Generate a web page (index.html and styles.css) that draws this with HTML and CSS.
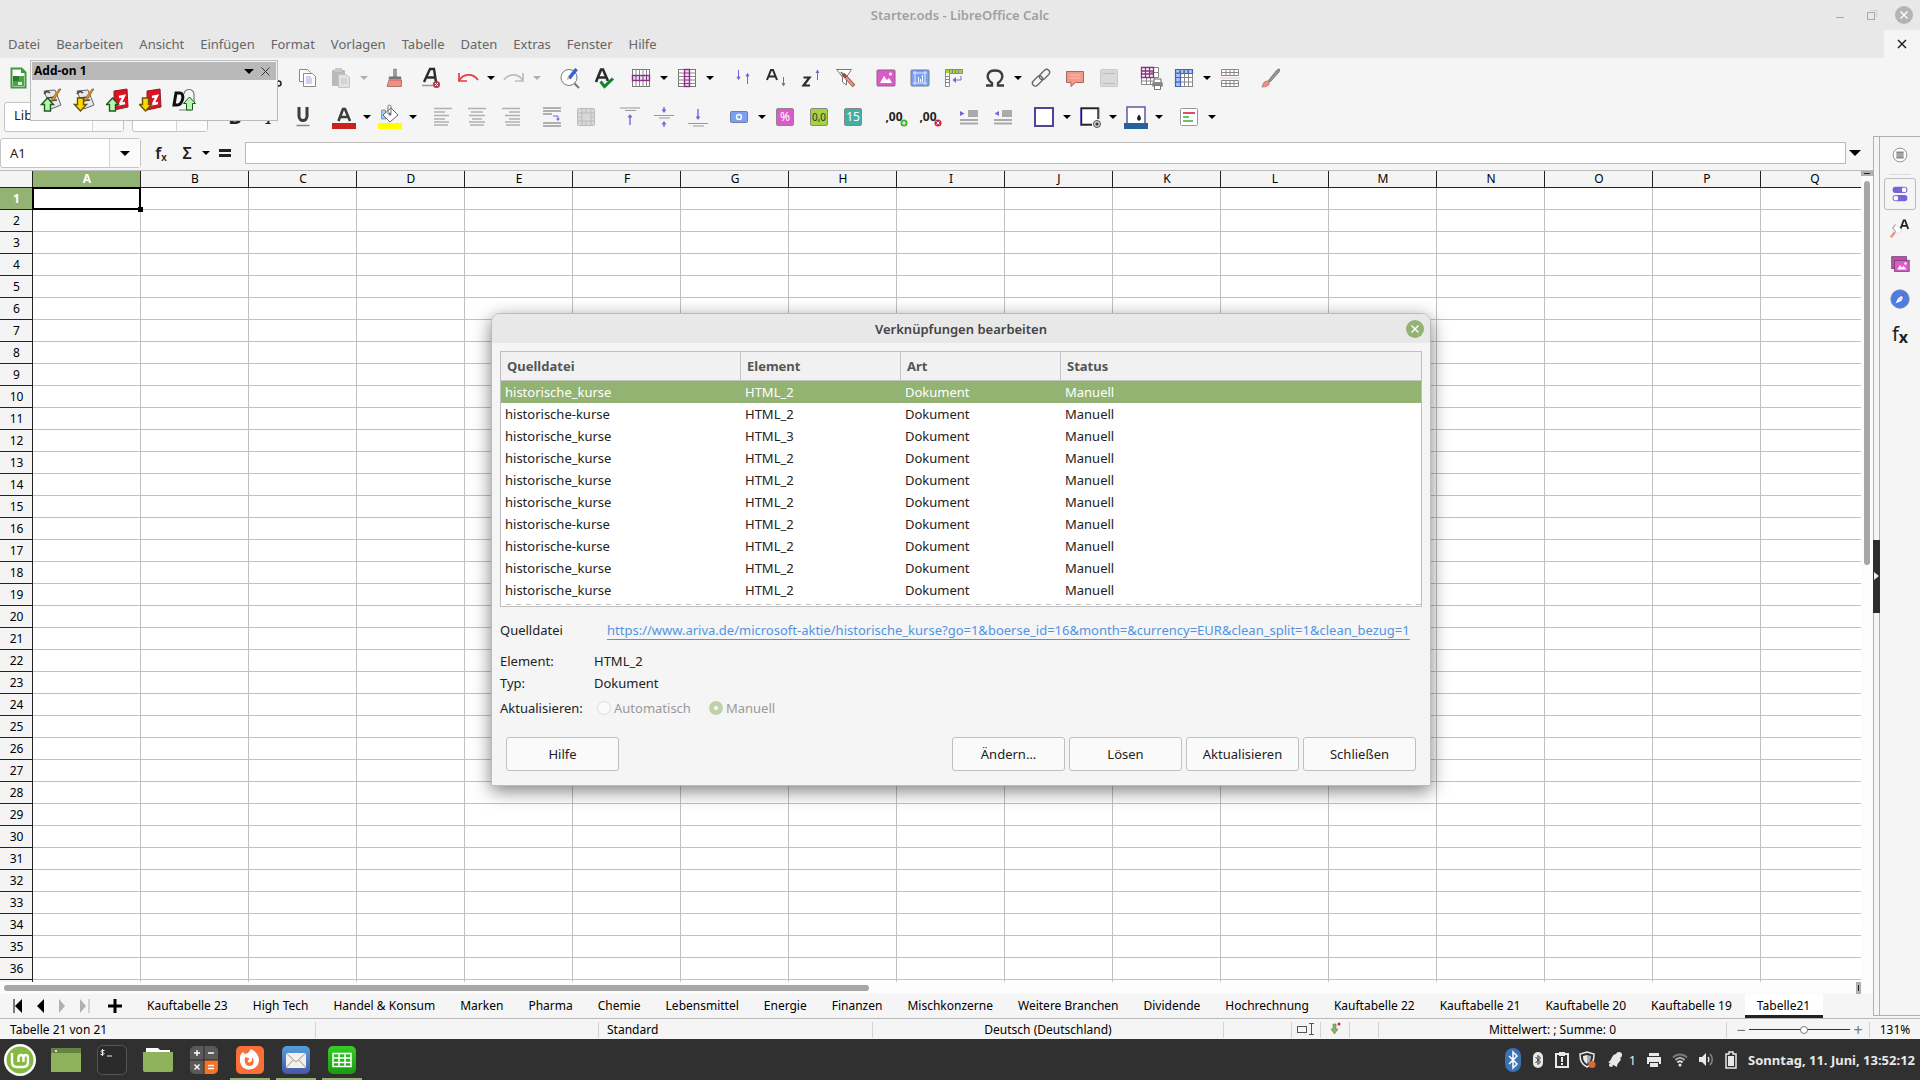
FILE: index.html
```
<!DOCTYPE html>
<html lang="de">
<head>
    <meta charset="UTF-8">
    <meta name="viewport" content="width=device-width, initial-scale=1.0">
    <title>Starter.ods - LibreOffice Calc</title>
    <link rel="stylesheet" href="styles.css">
</head>
<body>
    <header class="titlebar">
        <span class="titlebar-text">Starter.ods - LibreOffice Calc</span>
        <div class="window-buttons">
            <button aria-label="Minimieren"><svg width="20" height="20" viewBox="0 0 20 20"><path d="M6 12.500h8" stroke="#a9a9a9"/></svg></button>
            <button aria-label="Maximieren"><svg width="20" height="20" viewBox="0 0 20 20" fill="none"><path d="M8 5.500h6.500V12" stroke="#d0d0d0"/><rect x="5.500" y="7.500" width="7" height="7" stroke="#a9a9a9"/></svg></button>
            <button aria-label="Schließen"><svg width="20" height="20" viewBox="0 0 20 20"><circle cx="10" cy="10" r="9" fill="#b4b4b4"/><path d="M6.500 6.500l7 7m0-7l-7 7" stroke="#fff" stroke-width="1.400"/></svg></button>
        </div>
    </header>

    <nav class="menubar">
        <button>Datei</button>
        <button>Bearbeiten</button>
        <button>Ansicht</button>
        <button>Einfügen</button>
        <button>Format</button>
        <button>Vorlagen</button>
        <button>Tabelle</button>
        <button>Daten</button>
        <button>Extras</button>
        <button>Fenster</button>
        <button>Hilfe</button>
        <button class="doc-close" aria-label="Dokument schließen"><svg width="12" height="12" viewBox="0 0 12 12"><path d="M2 2l8 8m0-8l-8 8" stroke="#222" stroke-width="1.500"/></svg></button>
    </nav>

    <div class="toolbars">
        <!-- Standardleiste -->
        <div class="toolbar toolbar-standard">
            <button class="tool" aria-label="Neu"><svg viewBox="0 0 24 24"><path d="M5.500 2.500h10l4 4v15h-14z" fill="#fff" stroke="#3f9a3f" stroke-width="2"/><path d="M15 2v5h5" fill="#3f9a3f"/><path d="M7 10h11v10H7z" fill="#43a843"/><path d="M7 10h6v5H7z" fill="#277d2b"/><path d="M12 16h4v3h-4z" fill="#d8f0d8"/></svg></button>
            <span class="toolbar-fill"></span>
            <button class="tool" aria-label="Ausschneiden"><svg viewBox="0 0 24 24" fill="none" stroke="#222" stroke-width="1.500"><path d="M8 3l8 12M16 3L8 15"/><circle cx="6.500" cy="17.500" r="2.500"/><circle cx="17.500" cy="17.500" r="2.500"/></svg></button>
            <button class="tool" aria-label="Kopieren"><svg viewBox="0 0 24 24" fill="#fff" stroke="#8a8a8a"><path d="M4.500 3.500h8l3 3v9h-11z"/><path d="M8.500 7.500h9l3 3v10h-12z"/><path d="M11 11h5m-5 2h6m-6 2h6m-6 2h6" stroke="#a99cf0"/></svg></button>
            <button class="tool" aria-label="Einfügen"><svg viewBox="0 0 24 24"><rect x="3" y="4" width="13" height="16" rx="1" fill="#b9b9b9"/><rect x="6" y="2" width="7" height="4" fill="#c9c9c9"/><path d="M9.500 8.500h8l3 3v10h-11z" fill="#e2e2e2" stroke="#c4c4c4"/><path d="M12 13h6m-6 2h6m-6 2h6" stroke="#c4c4c4"/></svg></button>
            <button class="drop off" aria-label="Einfügen Optionen"></button>
            <span class="gap-m"></span>
            <button class="tool" aria-label="Format übertragen"><svg viewBox="0 0 24 24"><path d="M11.500 3h3v8h-3z" fill="#999" stroke="#777" stroke-width=".5"/><path d="M7 10.500h12l.5 3h-13z" fill="#777"/><path d="M7 14h12.500v6.500H5z" fill="#f58e80" stroke="#9a6a64" stroke-width=".8"/></svg></button>
            <span class="gap-s"></span>
            <button class="tool" aria-label="Direkte Formatierung löschen"><svg viewBox="0 0 24 24"><path d="M5 16L11 3h4l2 13m-9-4.500h8" fill="none" stroke="#2b2b2b" stroke-width="2.400"/><path d="M3 19.500h11" stroke="#999" stroke-width="1.500"/><circle cx="17.500" cy="18.500" r="3.500" fill="#c0304a"/><path d="M16 17l3 3m0-3l-3 3" stroke="#fff"/></svg></button>
            <span class="gap-s"></span>
            <button class="tool" aria-label="Rückgängig"><svg viewBox="0 0 24 24" fill="none" stroke="#ee3544" stroke-width="1.700"><path d="M3 7v8h8"/><path d="M3 15c4-8 14-8 19-1"/></svg></button>
            <button class="drop" aria-label="Rückgängig Liste"></button>
            <button class="tool" aria-label="Wiederherstellen"><svg viewBox="0 0 24 24" fill="none" stroke="#bdbdbd" stroke-width="1.700"><path d="M21 7v8h-8"/><path d="M21 15C17 7 7 7 2 14"/></svg></button>
            <button class="drop off" aria-label="Wiederherstellen Liste"></button>
            <span class="gap-l"></span>
            <button class="tool" aria-label="Suchen und Ersetzen"><svg viewBox="0 0 24 24"><circle cx="11" cy="11.500" r="8" fill="#fff" stroke="#777"/><path d="M16.500 17.500l4.500 4.500" stroke="#777" stroke-width="2"/><path d="M11 12.500L18.500 3" stroke="#2e62d9" stroke-width="3.600"/><path d="M8.500 14.500l1.500-4 2 2z" fill="#f7b45b"/></svg></button>
            <button class="tool" aria-label="Rechtschreibung"><svg viewBox="0 0 24 24" fill="none"><path d="M4 16L9 3.500h2L16 15M6.500 11.500h7" stroke="#2b2b2b" stroke-width="2.600"/><path d="M8.500 15.500l4 5 8.500-8" stroke="#12852b" stroke-width="3"/></svg></button>
            <span class="gap-s"></span>
            <button class="tool" aria-label="Zeile"><svg viewBox="0 0 24 24"><rect x="3.500" y="3.500" width="17" height="17" fill="#fff" stroke="#777"/><path d="M7 3v18m3.500-18v18M14 3v18m3.500-18v18" stroke="#888"/><rect x="3.500" y="9.500" width="17" height="5" fill="#eddcf0" stroke="#8b2f86" stroke-width="1.400"/><path d="M7 9v6m3.500-6v6M14 9v6m3.500-6v6" stroke="#8b2f86"/></svg></button>
            <button class="drop" aria-label="Zeile Optionen"></button>
            <button class="tool" aria-label="Spalte"><svg viewBox="0 0 24 24"><rect x="3.500" y="3.500" width="17" height="17" fill="#fff" stroke="#777"/><path d="M3 7h18M3 10.500h18M3 14h18M3 17.500h18" stroke="#888"/><rect x="9.500" y="3.500" width="5" height="17" fill="#eddcf0" stroke="#8b2f86" stroke-width="1.400"/><path d="M9 7h6m-6 3.500h6M9 14h6m-6 3.500h6" stroke="#8b2f86"/></svg></button>
            <button class="drop" aria-label="Spalte Optionen"></button>
            <span class="gap-l"></span>
            <button class="tool" aria-label="Sortieren"><svg viewBox="0 0 24 24" stroke="#7764d8" fill="#7764d8"><path d="M7.500 4v8M16.500 18v-9"/><path d="M6 11h3l-1.500 2.500zM15 10h3l-1.500-2.500z"/></svg></button>
            <button class="tool" aria-label="Aufsteigend sortieren"><svg viewBox="0 0 24 24"><path d="M2 14L6 4h2l4 10M4 10.500h6" fill="none" stroke="#2b2b2b" stroke-width="2"/><path d="M18.500 11v7" stroke="#7764d8"/><path d="M16.500 17h4l-2 3.500z" fill="#7764d8"/></svg></button>
            <button class="tool" aria-label="Absteigend sortieren"><svg viewBox="0 0 24 24"><path d="M4.500 11.500h6l-6 8h6.500" fill="none" stroke="#2b2b2b" stroke-width="2.200"/><path d="M18.500 14V5" stroke="#7764d8"/><path d="M16.500 7h4l-2-3.500z" fill="#7764d8"/></svg></button>
            <button class="tool" aria-label="AutoFilter"><svg viewBox="0 0 24 24"><path d="M3.500 3.500h15l-5 7.500v8l-4-3v-5z" fill="#fff" stroke="#777"/><path d="M8 6l4 5" stroke="#777" stroke-width="2"/><path d="M10 8l11 12" stroke="#8a5248" stroke-width="3.600"/><path d="M13 11.500l7.500 8" stroke="#f58e80" stroke-width="2.200"/></svg></button>
            <span class="gap-m"></span>
            <button class="tool" aria-label="Bild einfügen"><svg viewBox="0 0 24 24"><rect x="3" y="4" width="18" height="16" rx="1" fill="#db5cc9" stroke="#8e6089"/><path d="M6 17l4-7 3 4 2-2 3 5z" fill="#fff"/><circle cx="16.500" cy="8" r="1.500" fill="#fff"/></svg></button>
            <button class="tool" aria-label="Diagramm einfügen"><svg viewBox="0 0 24 24"><rect x="3" y="4" width="18" height="16" rx="1" fill="#7b9ff5" stroke="#6f7f9f"/><path d="M5 7h14M5 17h14M7 5v14M17 5v14" stroke="#e4ecff"/><path d="M10.500 16v-5m2 5v-3m2 3V9" stroke="#fff"/></svg></button>
            <button class="tool" aria-label="Pivot-Tabelle einfügen"><svg viewBox="0 0 24 24"><path d="M3.500 3.500h17v4h-13v13h-4z" fill="#fff" stroke="#888"/><path d="M4 4h16v3H4z" fill="#a5d142"/><path d="M7.500 3v4m3-4v4m3-4v4m3-4v4M3 10.500h4M3 13.500h4M3 16.500h4" stroke="#888"/><path d="M19 10v4h-7" fill="none" stroke="#7764d8"/><path d="M14 11l-3.500 3 3.500 3z" fill="#7764d8"/></svg></button>
            <span class="gap-m"></span>
            <button class="tool" aria-label="Sonderzeichen"><svg viewBox="0 0 24 24"><path d="M3 19.500h6V17C2 12 4 4.500 12 4.500S22 12 15 17v2.500h6" fill="none" stroke="#3d3d3d" stroke-width="2.400"/></svg></button>
            <button class="drop" aria-label="Sonderzeichen Liste"></button>
            <button class="tool" aria-label="Hyperlink"><svg viewBox="0 0 24 24" fill="none" stroke="#666" stroke-width="1.300"><rect x="2.500" y="12" width="12" height="6" rx="3" transform="rotate(-45 8.500 15)"/><rect x="9.500" y="5.500" width="12" height="6" rx="3" transform="rotate(-45 15.500 8.500)"/></svg></button>
            <button class="tool" aria-label="Kommentar"><svg viewBox="0 0 24 24"><path d="M3.500 5.500h17v11h-8L8 20.500v-4H3.500z" fill="#f69786" stroke="#a46a60"/><path d="M6.500 9h11m-11 3h11" stroke="#fff" stroke-opacity=".4"/></svg></button>
            <button class="tool" aria-label="Kopf- und Fußzeilen"><svg viewBox="0 0 24 24"><rect x="3.500" y="3.500" width="17" height="17" rx="1" fill="#d9d9d9" stroke="#cacaca"/><path d="M6 7.500h12M6 17.500h12" stroke="#b9b9b9"/></svg></button>
            <span class="gap-m"></span>
            <button class="tool" aria-label="Druckbereich"><svg viewBox="-2 -1 24 24"><path d="M1.500.5h17v17h-17z" fill="#fff"/><path d="M1.500 10.500h17v-10h-5m5 5h-8m-4 5v7m4-7v7m4-7v3M1.500 10v7.500h12M1.500 14h14" stroke="#888" fill="none"/><path d="M1.500.5h12v10h-12zM5.500 0v11m4-11v11M1 4h12.500M1 7h12.500" fill="none" stroke="#8b2f86" stroke-width="1.300"/><path d="M14 12h7v4h-7z" fill="#fff" stroke="#666"/><rect x="12" y="15" width="11" height="5" rx="2" fill="#888"/><path d="M14.500 18.500h6v4h-6z" fill="#fff" stroke="#777"/></svg></button>
            <button class="tool" aria-label="Zeilen und Spalten fixieren"><svg viewBox="0 0 24 24"><rect x="3.500" y="3.500" width="17" height="17" fill="#fff" stroke="#888"/><path d="M3.500 3.500h17v4h-12v13h-5z" fill="#a9c0f0"/><path d="M3 7.500h18M3 11.500h18M3 16h18M8.500 3v18m4-18v18m4-18v18" stroke="#888"/><path d="M3.500 3.500h17v4h-12v13h-5zM3 11.500h5m-5 4.500h5m4-13v4m4-4v4m-8-4v4H3" fill="none" stroke="#4165bd" stroke-width="1.200"/></svg></button>
            <button class="drop" aria-label="Fixieren Optionen"></button>
            <button class="tool" aria-label="Fenster teilen"><svg viewBox="0 0 24 24" fill="#fff" stroke="#888"><path d="M3.500 3.500h17v6h-17zM3.500 14.500h17v6h-17zM8 3.500v6m4-6v6m4-6v6m-12.500-3h17M8 14.500v6m4-6v6m4-6v6m-12.500-3h17"/><path d="M2 12h20" stroke="#f0c8d8"/></svg></button>
            <span class="gap-m"></span>
            <button class="tool" aria-label="Zeichenfunktionen"><svg viewBox="0 0 24 24"><path d="M9 15L18 4l2.500-1L20 6l-9 10z" fill="#999" stroke="#777"/><path d="M3 21c1-4 2-6 5.500-6l2 2C10 20 7 21 3 21z" fill="#f58e80" stroke="#9a6a64" stroke-width=".6"/></svg></button>
        </div>

        <!-- Formatleiste -->
        <div class="toolbar toolbar-format">
            <div class="combo combo-font">
                <input type="text" value="Liberation Sans" aria-label="Schriftname">
                <button class="drop" aria-label="Schriftliste"></button>
            </div>
            <div class="combo combo-size">
                <input type="text" value="10" aria-label="Schriftgröße">
                <button class="drop" aria-label="Größenliste"></button>
            </div>
            <button class="tool glyph" aria-label="Fett"><b>B</b></button>
            <button class="tool glyph" aria-label="Kursiv"><i>I</i></button>
            <button class="tool" aria-label="Unterstrichen"><svg viewBox="0 0 24 24" fill="none"><path d="M8 2v9c0 6 8 6 8 0V2" stroke="#3d3d3d" stroke-width="3"/><path d="M5.500 20.500h13" stroke="#888" stroke-width="1.500"/></svg></button>
            <span class="gap-m"></span>
            <button class="tool" aria-label="Schriftfarbe"><svg viewBox="0 0 24 24"><path d="M6.500 16L11 4h2l5 12M8 12h8" fill="none" stroke="#3d3d3d" stroke-width="2.600"/><path d="M0 18h24v6H0z" fill="#c9211e"/></svg></button>
            <button class="drop" aria-label="Schriftfarbe Palette"></button>
            <button class="tool" aria-label="Hintergrundfarbe"><svg viewBox="0 0 24 24"><path d="M3.500 5h4v9h-4z" fill="#9fd0ee" stroke="#6aa5c8"/><path d="M5 10l8-7 7 7-8 7z" fill="#fff" stroke="#666"/><path d="M10 9V1.500c0-2 3-2 3 0V8" fill="none" stroke="#777"/><circle cx="12" cy="9" r="1.500" fill="#666"/><path d="M0 18h24v6H0z" fill="#ff0"/></svg></button>
            <button class="drop" aria-label="Hintergrundfarbe Palette"></button>
            <span class="gap-m"></span>
            <button class="tool" aria-label="Linksbündig"><svg viewBox="0 0 24 24" stroke="#b0b0b0" stroke-width="1.300"><path d="M3 3.500h18M3 7h11M3 10.500h15M3 14h11M3 17h15M3 20h14"/></svg></button>
            <button class="tool" aria-label="Zentriert"><svg viewBox="0 0 24 24" stroke="#b0b0b0" stroke-width="1.300"><path d="M3 3.500h18M6 7h12M4 10.500h16M7 14h10M4 17h16M5 20h14"/></svg></button>
            <button class="tool" aria-label="Rechtsbündig"><svg viewBox="0 0 24 24" stroke="#b0b0b0" stroke-width="1.300"><path d="M3 3.500h18M10 7h11M6 10.500h15M10 14h11M6 17h15M7 20h14"/></svg></button>
            <span class="gap-m"></span>
            <button class="tool" aria-label="Textumbruch"><svg viewBox="0 0 24 24" stroke="#999" stroke-width="1.400" fill="none"><path d="M3 3h18M3 6h18M3 9h9M3 18h18M3 21h18"/><path d="M13 11h5v4" stroke="#7764d8" stroke-width="1"/><path d="M16 13.500h4L18 16z" fill="#7764d8" stroke="none"/></svg></button>
            <button class="tool" aria-label="Zellen verbinden"><svg viewBox="0 0 24 24"><rect x="3.500" y="3.500" width="17" height="17" rx="1" fill="#d8d8d8" stroke="#bbb"/><path d="M3 8h18M3 16h18M8 3v18m9-18v18M12 3v5m0 8v5M3 12h5m9 0h4" stroke="#bbb"/></svg></button>
            <span class="gap-l"></span>
            <button class="tool" aria-label="Oben ausrichten"><svg viewBox="0 0 24 24"><path d="M2 3h20M7 5.500h11" stroke="#999"/><path d="M12 20v-8" stroke="#7764d8" stroke-width="1.400"/><path d="M9.500 12.500h5L12 9z" fill="#7764d8"/></svg></button>
            <button class="tool" aria-label="Vertikal zentrieren"><svg viewBox="0 0 24 24"><path d="M2 10.500h20M7 13h11" stroke="#999"/><path d="M12 2v3m0 14v3" stroke="#7764d8" stroke-width="1.400"/><path d="M9.500 4.500h5L12 8zM9.500 19.500h5L12 16z" fill="#7764d8"/></svg></button>
            <button class="tool" aria-label="Unten ausrichten"><svg viewBox="0 0 24 24"><path d="M2 18.500h20M7 21h11" stroke="#999"/><path d="M12 4v8" stroke="#7764d8" stroke-width="1.400"/><path d="M9.500 11.500h5L12 15z" fill="#7764d8"/></svg></button>
            <span class="gap-m"></span>
            <button class="tool" aria-label="Währung"><svg viewBox="0 0 24 24"><rect x="3.500" y="6.500" width="17" height="11" rx="1" fill="#7b9ff5" stroke="#6f7f9f"/><circle cx="12" cy="12" r="2.500" fill="none" stroke="#fff" stroke-width="1.400"/></svg></button>
            <button class="drop" aria-label="Währung Liste"></button>
            <button class="tool" aria-label="Prozent"><span class="chip chip-percent">%</span></button>
            <button class="tool" aria-label="Zahl"><span class="chip chip-number">0,0</span></button>
            <button class="tool" aria-label="Datum"><span class="chip chip-date">15</span></button>
            <span class="gap-m"></span>
            <button class="tool decimals" aria-label="Dezimalstelle hinzufügen">,00<svg viewBox="0 0 8 8"><circle cx="4" cy="4" r="3.500" fill="#3fb02c"/><path d="M2 4h4M4 2v4" stroke="#fff"/></svg></button>
            <button class="tool decimals" aria-label="Dezimalstelle löschen">,00<svg viewBox="0 0 8 8"><circle cx="4" cy="4" r="3.500" fill="#d02440"/><path d="M2.500 2.500l3 3m0-3l-3 3" stroke="#fff"/></svg></button>
            <span class="gap-m"></span>
            <button class="tool" aria-label="Einzug erhöhen"><svg viewBox="0 0 24 24"><path d="M11 5h10v7H11zM3 14h18v2H3zM3 17.500h18v2H3z" fill="#aaa"/><path d="M3 6l4.500 2.500L3 11z" fill="#7764d8"/></svg></button>
            <button class="tool" aria-label="Einzug verringern"><svg viewBox="0 0 24 24"><path d="M11 5h10v7H11zM3 14h18v2H3zM3 17.500h18v2H3z" fill="#aaa"/><path d="M8 6L3.500 8.500 8 11z" fill="#7764d8"/></svg></button>
            <span class="gap-m"></span>
            <button class="tool" aria-label="Umrandung"><svg viewBox="0 0 24 24"><rect x="3" y="3" width="18" height="18" fill="#fff" stroke="#504494" stroke-width="2"/></svg></button>
            <button class="drop" aria-label="Umrandung Liste"></button>
            <button class="tool" aria-label="Rahmenstil"><svg viewBox="0 0 24 24"><path d="M2.500 20V2.500H21V14M2 20.500h12" fill="#fff" stroke="#7764d8"/><path d="M3.500 20V3.500H20V14M3 19.500h11" fill="none" stroke="#222" stroke-width="1.400"/><circle cx="19" cy="19" r="3.500" fill="#ccc" stroke="#555"/><circle cx="19" cy="19" r="1.500" fill="#333"/></svg></button>
            <button class="drop" aria-label="Rahmenstil Liste"></button>
            <button class="tool" aria-label="Rahmenfarbe"><svg viewBox="0 0 24 24"><rect x="3" y="2" width="18" height="18" fill="#fff" stroke="#6c62a0" stroke-width="1.600"/><path d="M15 10c5 7-5 7 0 0z" fill="#222" stroke="#222"/><path d="M0 18h24v6H0z" fill="#2a6099"/></svg></button>
            <button class="drop" aria-label="Rahmenfarbe Palette"></button>
            <span class="gap-m"></span>
            <button class="tool" aria-label="Bedingte Formatierung"><svg viewBox="0 0 24 24"><rect x="3.500" y="3.500" width="17" height="17" rx="1" fill="#fff" stroke="#999"/><path d="M6 8h12" stroke="#d02440" stroke-width="1.600"/><path d="M6 12h6M6 16h10" stroke="#3fb02c" stroke-width="1.600"/></svg></button>
            <button class="drop" aria-label="Bedingte Formatierung Liste"></button>
        </div>
    </div>

    <section class="addon-window" aria-label="Add-on 1">
        <div class="addon-title">
            <span>Add-on 1</span>
            <button class="drop" aria-label="Menü"></button>
            <button aria-label="Schließen"><svg width="11" height="11" viewBox="0 0 11 11"><path d="M1.500 1.500l8 8m0-8l-8 8" stroke="#333"/></svg></button>
        </div>
        <div class="addon-tools">
            <button aria-label="Depot exportieren"><svg viewBox="0 0 24 24"><path d="M4 3l11-1 6 15-10 4z" fill="#e8e8e8" stroke="#666"/><path d="M4 6c2-3 4-3 6-1M7 10l9-1M8 13l9-1" fill="none" stroke="#444" stroke-width="1.600"/><path d="M21 1L14 12l-3 1.500 1-3L19 1z" fill="#e0902a" stroke="#7c4a10" stroke-width=".6"/><path d="M7.500 10l6 6.500h-3V23h-6v-6.500h-3z" fill="#b9f5b0" stroke="#1c5a1c" stroke-width="1.400"/></svg></button>
            <button aria-label="Depot importieren"><svg viewBox="0 0 24 24"><path d="M4 3l11-1 6 15-10 4z" fill="#e8e8e8" stroke="#666"/><path d="M4 6c2-3 4-3 6-1M7 10l9-1M8 13l9-1" fill="none" stroke="#444" stroke-width="1.600"/><path d="M21 1L14 12l-3 1.500 1-3L19 1z" fill="#e0902a" stroke="#7c4a10" stroke-width=".6"/><path d="M7.500 23l6-6.500h-3V10h-6v6.500h-3z" fill="#ffd800" stroke="#6a5200" stroke-width="1.400"/></svg></button>
            <button aria-label="Z exportieren"><svg viewBox="0 0 24 24"><path d="M8 3l13-2 1 18-14 3z" fill="#dc1220" stroke="#8c2028"/><path d="M13 9l5-1-4 8 5-1" fill="none" stroke="#fff" stroke-width="2.400"/><path d="M6.500 10l6 6.500h-3V23h-6v-6.500h-3z" fill="#b9f5b0" stroke="#1c5a1c" stroke-width="1.400"/></svg></button>
            <button aria-label="Z importieren"><svg viewBox="0 0 24 24"><path d="M8 3l13-2 1 18-14 3z" fill="#dc1220" stroke="#8c2028"/><path d="M13 9l5-1-4 8 5-1" fill="none" stroke="#fff" stroke-width="2.400"/><path d="M6.500 23l6-6.500h-3V10h-6v6.500h-3z" fill="#ffd800" stroke="#6a5200" stroke-width="1.400"/></svg></button>
            <button aria-label="D exportieren"><svg viewBox="0 0 24 24"><path d="M4 5h4c5 0 3 12-3 12H2z" fill="none" stroke="#111" stroke-width="3"/><path d="M12 6c1-6 9-6 10 0v10M7 22h12" fill="none" stroke="#777" stroke-width="1.200"/><path d="M17.500 9l6 6.500h-3V22h-6v-6.500h-3z" fill="#b9f5b0" stroke="#1c5a1c"/></svg></button>
        </div>
    </section>

    <div class="workspace">
        <main class="document">
            <div class="formula-bar">
                <div class="combo combo-name">
                    <input type="text" value="A1" aria-label="Namenfeld">
                    <button class="drop" aria-label="Namenliste"></button>
                </div>
                <button class="formula-tool" aria-label="Funktions-Assistent">f<sub>x</sub></button>
                <button class="formula-tool" aria-label="Summe">Σ</button>
                <button class="drop" aria-label="Funktion auswählen"></button>
                <button class="formula-tool" aria-label="Formel"><svg width="16" height="16" viewBox="0 0 16 16"><path d="M2 4h12v3H2zM2 9h12v3H2z" fill="#222"/></svg></button>
                <input class="formula-input" type="text" aria-label="Eingabezeile">
                <button class="drop drop-big" aria-label="Eingabezeile aufklappen"></button>
            </div>
            <div class="sheet-area">
                <div class="sheet" id="sheet">
                    <table class="cells" id="cells"></table>
                    <span class="cell-cursor"></span>
                </div>
                <div class="vscroll"><span class="vsplit"></span><span class="vthumb"></span></div>
            </div>
            <div class="hscroll"><span class="hthumb"></span><span class="hsplit"></span></div>
            <div class="sheet-tabs">
                <button class="tab-nav" aria-label="Erste Tabelle"><svg viewBox="0 0 16 16"><path d="M4 1v14" stroke="#000"/><path d="M12 1v14L5 8z"/></svg></button>
                <button class="tab-nav" aria-label="Vorherige Tabelle"><svg viewBox="0 0 16 16"><path d="M12 1v14L5 8z"/></svg></button>
                <button class="tab-nav" aria-label="Nächste Tabelle"><svg viewBox="0 0 16 16"><path d="M5 1v14l6-7z" fill="#b0b0b0"/></svg></button>
                <button class="tab-nav" aria-label="Letzte Tabelle"><svg viewBox="0 0 16 16"><path d="M13 1v14" stroke="#b0b0b0"/><path d="M4 1v14l6-7z" fill="#b0b0b0"/></svg></button>
                <button class="tab-add" aria-label="Tabelle hinzufügen"><svg viewBox="0 0 16 16"><path d="M8 1v14M1 8h14" stroke="#000" stroke-width="3"/></svg></button>
                <button class="tab">Kauftabelle 23</button>
                <button class="tab">High Tech</button>
                <button class="tab">Handel &amp; Konsum</button>
                <button class="tab">Marken</button>
                <button class="tab">Pharma</button>
                <button class="tab">Chemie</button>
                <button class="tab">Lebensmittel</button>
                <button class="tab">Energie</button>
                <button class="tab">Finanzen</button>
                <button class="tab">Mischkonzerne</button>
                <button class="tab">Weitere Branchen</button>
                <button class="tab">Dividende</button>
                <button class="tab">Hochrechnung</button>
                <button class="tab">Kauftabelle 22</button>
                <button class="tab">Kauftabelle 21</button>
                <button class="tab">Kauftabelle 20</button>
                <button class="tab">Kauftabelle 19</button>
                <button class="tab active">Tabelle21</button>
            </div>
        </main>
        <div class="splitter"><button aria-label="Seitenleiste ausblenden"></button></div>
        <aside class="sidebar">
            <button aria-label="Einstellungen"><svg viewBox="0 0 24 24"><circle cx="12" cy="12" r="7.500" fill="#fff" stroke="#888"/><path d="M8 9h8M8 11h8M8 13h8M8 15h8" stroke="#888" stroke-width="1.600"/></svg></button>
            <hr>
            <button class="current" aria-label="Eigenschaften"><svg viewBox="0 0 24 24"><rect x="4" y="4" width="16" height="7" rx="3" fill="#7764d8"/><circle cx="16.500" cy="7.500" r="2.500" fill="#fff"/><rect x="4" y="13" width="16" height="7" rx="3" fill="#7764d8"/><circle cx="7.500" cy="16.500" r="2.500" fill="#fff"/></svg></button>
            <button aria-label="Formatvorlagen"><svg viewBox="0 0 24 24"><path d="M12.500 12L16 2.500h1.500L21 12m-7-3.500h6" fill="none" stroke="#222" stroke-width="2"/><path d="M4 15l3-8 7 6-3 4z" fill="#fff" stroke="#ddd"/><path d="M7 7l-3 4 3 3-1 3" fill="none" stroke="#888"/><path d="M6 16l-4 5" stroke="#f58e80" stroke-width="2.600"/></svg></button>
            <button aria-label="Galerie"><svg viewBox="0 0 24 24"><rect x="3" y="4" width="16" height="13" fill="#c24fb2" stroke="#7b4475"/><rect x="6" y="8" width="16" height="12" fill="#db5cc9" stroke="#7b4475"/><path d="M9 18l3-5 2.500 3 1.500-2 3 4z" fill="#fff"/><circle cx="18" cy="11.500" r="1.300" fill="#fff"/></svg></button>
            <button aria-label="Navigator"><svg viewBox="0 0 24 24"><circle cx="12" cy="12" r="10" fill="#4c7ce8" stroke="#77889f"/><path d="M7 17l3-6 4 3z" fill="#fff"/><path d="M16 7l-6 4 4 3z" fill="#e8eefc"/><path d="M17 6l-3.500 2.500 2 1.500z" fill="#e02c40"/></svg></button>
            <button class="fx" aria-label="Funktionen">f<sub>x</sub></button>
        </aside>
    </div>

    <footer class="statusbar">
        <span class="status-sheet">Tabelle 21 von 21</span>
        <span class="status-find"></span>
        <span class="status-style">Standard</span>
        <span class="status-lang">Deutsch (Deutschland)</span>
        <span class="status-empty"></span>
        <span class="status-icon"><svg width="20" height="14" viewBox="0 0 20 14" fill="none" stroke="#555"><rect x="1.500" y="4.500" width="9" height="6"/><path d="M13 1.500h5M13 12.500h5M15.500 1.500v11"/></svg></span>
        <span class="status-icon"><svg width="14" height="14" viewBox="0 0 14 14"><path d="M5 2h3v5h2l-3.500 5L3 7h2z" fill="#8ab557" stroke="#6c7c58" stroke-width=".6"/><circle cx="11" cy="2" r="1.500" fill="#d02440"/></svg></span>
        <span class="status-icon"></span>
        <span class="status-sum">Mittelwert: ; Summe: 0</span>
        <span class="status-slider">
            <button aria-label="Verkleinern">−</button>
            <input type="range" min="0" max="100" value="55" aria-label="Maßstab">
            <button aria-label="Vergrößern">+</button>
        </span>
        <span class="status-zoom">131%</span>
    </footer>

    <div class="panel">
        <button class="launcher menu" aria-label="Menü"><svg width="32" height="32" viewBox="0 0 32 32"><circle cx="16" cy="16" r="16" fill="#fff"/><circle cx="16" cy="16" r="13.500" fill="#87b840"/><path d="M8 9v9c0 3 2 5 5 5h6c3 0 5-2 5-5v-4c0-4-4.500-4-4.500 0v4m0-4c0-4-5-4-5 0v4" fill="none" stroke="#fff" stroke-width="2.400"/></svg></button>
        <button class="launcher" aria-label="Schreibtisch anzeigen"><svg width="30" height="24" viewBox="0 0 30 24"><path d="M0 0h30v24H0z" fill="#8fb35c"/><path d="M0 0h30v5H0z" fill="#658441"/><circle cx="5" cy="3" r="1" fill="#fff"/></svg></button>
        <button class="launcher" aria-label="Terminal"><svg width="30" height="30" viewBox="0 0 30 30"><rect x=".5" y=".5" width="29" height="29" rx="5" fill="#2b2b2b" stroke="#555"/><path d="M7.500 5.500H5.500c-2 0-2 2 0 2s2 2 0 2h-2M5.500 4v7M10 11h5" fill="none" stroke="#eee"/></svg></button>
        <button class="launcher" aria-label="Dateien"><svg width="30" height="26" viewBox="0 0 30 26"><path d="M3 1h12l2 2h10v6H3z" fill="#fff"/><path d="M0 5h30v18a2 2 0 01-2 2H2a2 2 0 01-2-2z" fill="#8fb35c"/></svg></button>
        <button class="launcher" aria-label="Rechner"><svg width="28" height="28" viewBox="0 0 28 28"><rect width="28" height="28" rx="5" fill="#5a5a5a"/><path d="M14 14h14v9a5 5 0 01-5 5h-9z" fill="#f37329"/><path d="M14 0v28M0 14h28" stroke="#2b2b2b"/><path d="M4 7h6M7 4v6M18 7h6M4.500 18.500l5 5m0-5l-5 5M18 19.500h6m-6 3h6" stroke="#fff" stroke-width="1.400"/></svg></button>
        <button class="launcher running" aria-label="Firefox"><svg width="28" height="28" viewBox="0 0 28 28"><rect width="28" height="28" rx="5" fill="#fb6e3a"/><path d="M5 8l2-2 2 2 3-1 3-4c4 2 8 6 8 11 0 12-18 13-19 1-.3-3 0-5 1-7z" fill="#fff"/><path d="M9.500 11l4 1.500-2 3c3 3 6-2 4-4.500 3 2 3.500 9-2 9-4 0-6-5-4-9z" fill="#fb6e3a"/></svg></button>
        <button class="launcher running" aria-label="E-Mail"><svg width="28" height="28" viewBox="0 0 28 28"><defs><linearGradient id="mail" x2="0" y2="1"><stop stop-color="#52a0da"/><stop offset="1" stop-color="#4b55a5"/></linearGradient></defs><rect width="28" height="28" rx="5" fill="url(#mail)"/><path d="M4 7h20v15H4z" fill="#f2f0ea"/><path d="M4 7l10 9L24 7M4 22l7-8m13 8l-7-8" fill="none" stroke="#9a988f"/></svg></button>
        <button class="launcher running" aria-label="Calc"><svg width="28" height="28" viewBox="0 0 28 28"><defs><linearGradient id="calc" x2="0" y2="1"><stop stop-color="#38cc28"/><stop offset="1" stop-color="#1a9a10"/></linearGradient></defs><rect width="28" height="28" rx="5" fill="url(#calc)"/><path d="M5 7.500h18v13H5zM11 7.500v13m6-13v13M5 12h18M5 16.500h18" fill="none" stroke="#fff" stroke-width="1.500"/></svg></button>

        <div class="tray">
            <svg width="16" height="24" viewBox="0 0 16 24"><rect width="16" height="24" rx="8" fill="#3a72b5"/><path d="M4 8l8 8-4 4V4l4 4-8 8" fill="none" stroke="#fff" stroke-width="1.500"/></svg>
            <svg width="14" height="18" viewBox="0 0 14 18"><rect x="2" y="1" width="10" height="16" rx="5" fill="#e8e8e8"/><path d="M4.500 6l5 5L7 13.500v-9L9.500 7l-5 5" fill="none" stroke="#303030"/></svg>
            <svg width="14" height="18" viewBox="0 0 14 18"><rect x="1" y="3" width="12" height="13" fill="none" stroke="#e8e8e8" stroke-width="2"/><path d="M4 1h6v4H4z" fill="#e8e8e8"/><path d="M7 6v5m0 1v2" stroke="#e8e8e8" stroke-width="2"/></svg>
            <svg width="18" height="18" viewBox="0 0 18 18"><path d="M8 1l7 2c0 6-1 10-7 13C2 13 1 9 1 3z" fill="none" stroke="#e8e8e8" stroke-width="1.500"/><path d="M8 4l4 1c0 4-1 6-4 8z" fill="#aaa"/><path d="M8 4L4 5c0 4 1 6 4 8z" fill="#e8e8e8"/><circle cx="13" cy="13.500" r="3.500" fill="#dc6a30"/></svg>
            <span class="tray-notes"><svg width="16" height="18" viewBox="0 0 16 18"><path d="M1 11C5 10 4 4 9 3l5 5c-1 3-4 4-4 8z" fill="#e8e8e8"/><circle cx="12" cy="4" r="3" fill="#e8e8e8"/><circle cx="4" cy="14" r="2" fill="#e8e8e8"/></svg>1</span>
            <svg width="16" height="18" viewBox="0 0 16 18"><path d="M3 2h10v3H3zM1 6h14v7h-2v-2H3v2H1zM4 12h8v4H4z" fill="#e8e8e8"/></svg>
            <svg width="16" height="18" viewBox="0 0 16 18" fill="none" stroke-width="2"><path d="M1 6.500c4-4 10-4 14 0" stroke="#777"/><path d="M3.500 9c3-3 6-3 9 0" stroke="#aaa"/><path d="M5.500 11.500c2-2 3-2 5 0" stroke="#e8e8e8"/><circle cx="8" cy="14" r="1.500" fill="#e8e8e8"/></svg>
            <svg width="16" height="18" viewBox="0 0 16 18" fill="none"><path d="M1 6h3l4-4v13l-4-4H1z" fill="#e8e8e8"/><path d="M10 6c1 1 1 4 0 5" stroke="#e8e8e8" stroke-width="1.500"/><path d="M12 3c3 3 3 8 0 11" stroke="#888" stroke-width="1.500"/></svg>
            <svg width="14" height="18" viewBox="0 0 14 18"><path d="M2 3h3V1h4v2h3v14H2z" fill="none" stroke="#e8e8e8" stroke-width="1.500"/><path d="M4 5h6v10H4z" fill="#e8e8e8"/></svg>
            <span class="clock">Sonntag, 11. Juni, 13:52:12</span>
        </div>
    </div>

    <form class="dialog" role="dialog" aria-labelledby="dialogTitle">
        <div class="dialog-title">
            <h1 id="dialogTitle">Verknüpfungen bearbeiten</h1>
            <button type="button" aria-label="Schließen"><svg width="18" height="18" viewBox="0 0 18 18"><circle cx="9" cy="9" r="9" fill="#92b372"/><path d="M5.500 5.500l7 7m0-7l-7 7" stroke="#fff" stroke-width="1.400"/></svg></button>
        </div>
        <div class="dialog-body">
            <div class="link-list">
                <table class="links">
                    <colgroup><col class="col-file"><col class="col-item"><col class="col-type"><col></colgroup>
                    <thead>
                        <tr><th>Quelldatei</th><th>Element</th><th>Art</th><th>Status</th></tr>
                    </thead>
                    <tbody>
                        <tr class="selected"><td>historische_kurse</td><td>HTML_2</td><td>Dokument</td><td>Manuell</td></tr>
                        <tr><td>historische-kurse</td><td>HTML_2</td><td>Dokument</td><td>Manuell</td></tr>
                        <tr><td>historische_kurse</td><td>HTML_3</td><td>Dokument</td><td>Manuell</td></tr>
                        <tr><td>historische_kurse</td><td>HTML_2</td><td>Dokument</td><td>Manuell</td></tr>
                        <tr><td>historische_kurse</td><td>HTML_2</td><td>Dokument</td><td>Manuell</td></tr>
                        <tr><td>historische_kurse</td><td>HTML_2</td><td>Dokument</td><td>Manuell</td></tr>
                        <tr><td>historische-kurse</td><td>HTML_2</td><td>Dokument</td><td>Manuell</td></tr>
                        <tr><td>historische-kurse</td><td>HTML_2</td><td>Dokument</td><td>Manuell</td></tr>
                        <tr><td>historische_kurse</td><td>HTML_2</td><td>Dokument</td><td>Manuell</td></tr>
                        <tr><td>historische_kurse</td><td>HTML_2</td><td>Dokument</td><td>Manuell</td></tr>
                    </tbody>
                </table>
                <div class="more-rows"></div>
            </div>
            <div class="source">
                <span>Quelldatei</span>
                <a href="https://www.ariva.de/microsoft-aktie/historische_kurse?go=1&amp;boerse_id=16&amp;month=&amp;currency=EUR&amp;clean_split=1&amp;clean_bezug=1">https://www.ariva.de/microsoft-aktie/historische_kurse?go=1&amp;boerse_id=16&amp;month=&amp;currency=EUR&amp;clean_split=1&amp;clean_bezug=1</a>
            </div>
            <div class="details">
                <span>Element:</span><span>HTML_2</span>
                <span>Typ:</span><span>Dokument</span>
            </div>
            <div class="update">
                <span>Aktualisieren:</span>
                <label><input type="radio" name="update" disabled>Automatisch</label>
                <label><input type="radio" name="update" checked disabled>Manuell</label>
            </div>
            <div class="dialog-buttons">
                <button type="button" class="help">Hilfe</button>
                <button type="button">Ändern…</button>
                <button type="button">Lösen</button>
                <button type="button">Aktualisieren</button>
                <button type="button">Schließen</button>
            </div>
        </div>
    </form>

    <script src="script.js"></script>
</body>
</html>
```
FILE: styles.css
```
* {
    box-sizing: border-box;
}

body {
    margin: 0;
    height: 100vh;
    display: flex;
    flex-direction: column;
    overflow: hidden;
    position: relative;
    background: #f5f5f5;
    color: #222;
    font-family: "Noto Sans", sans-serif;
    font-size: 13px;
    line-height: 18px;
}

button,
input {
    font: inherit;
    color: inherit;
}

button {
    display: flex;
    align-items: center;
    justify-content: center;
    padding: 0;
    border: none;
    background: none;
    white-space: nowrap;
}

/* Titelleiste und Menü */
.titlebar {
    display: flex;
    align-items: center;
    justify-content: center;
    height: 30px;
    position: relative;
    background: #e8e8e8;
    color: #a0a0a0;
    font-weight: 600;
}

.window-buttons {
    position: absolute;
    top: 5px;
    right: 6px;
    display: flex;
    gap: 12px;
}

.menubar {
    display: flex;
    align-items: center;
    gap: 16px;
    height: 28px;
    padding-left: 8px;
    background: #e8e8e8;
    color: #666;
}

.doc-close {
    width: 36px;
    height: 28px;
    margin-left: auto;
    background: #f5f5f5;
}

/* Symbolleisten */
.toolbars {
    height: 78px;
}

.toolbar {
    display: flex;
    align-items: center;
    height: 39px;
}

.toolbar-standard {
    padding-left: 1px;
}

.toolbar-format {
    padding-left: 4px;
}

.toolbar-fill {
    width: 221px;
}

.tool {
    flex: none;
    width: 34px;
    height: 34px;
}

.tool svg {
    width: 24px;
    height: 24px;
    overflow: visible;
}

.glyph {
    font-size: 20px;
}

.drop {
    flex: none;
    width: 12px;
    height: 20px;
}

.drop::before {
    content: "";
    border: 4px solid transparent;
    border-top-color: #000;
    border-bottom: none;
}

.drop.off::before {
    border-top-color: #b0b0b0;
}

.drop-big::before {
    border-width: 6px;
}

.gap-s { width: 3px; }
.gap-m { width: 7px; }
.gap-l { width: 10px; }

.chip {
    width: 18px;
    height: 18px;
    border: 1px solid #888;
    border-radius: 2px;
    color: #fff;
    font-size: 12px;
    line-height: 16px;
    text-align: center;
}

.chip-percent { background: #db5cc9; }
.chip-number { background: #a5d142; color: #333; font-size: 10px; }
.chip-date { background: #3fb0a3; }

.decimals {
    position: relative;
    color: #222;
    font-size: 12px;
    font-weight: bold;
}

.decimals svg {
    position: absolute;
    right: 3px;
    bottom: 7px;
    width: 8px;
    height: 8px;
}

.combo {
    display: flex;
    height: 30px;
    border: 1px solid #c4c4c4;
    border-radius: 3px;
    background: #fff;
}

.combo input {
    flex: 1;
    min-width: 0;
    padding: 0 9px;
    border: none;
    background: none;
}

.combo .drop {
    width: 31px;
    height: 28px;
    border-left: 1px solid #d4d4d4;
    background: #fafafa;
}

.toolbar-format .combo input {
    padding-bottom: 4px;
}

.combo-font {
    width: 120px;
    margin-right: 8px;
}

.combo-size {
    width: 76px;
    margin-right: 10px;
}

.combo-name {
    width: 141px;
}

.combo-name .drop::before {
    border-width: 5px;
}

/* Frei schwebende Add-on-Leiste */
.addon-window {
    position: absolute;
    top: 60px;
    left: 30px;
    width: 248px;
    height: 61px;
    padding: 1px;
    border: 1px solid #bbb;
    background: #f5f5f5;
}

.addon-title {
    display: flex;
    align-items: center;
    gap: 5px;
    height: 18px;
    padding: 0 5px 0 2px;
    background: #b9b9b9;
    color: #000;
    font-size: 12px;
    font-weight: bold;
}

.addon-title span {
    flex: 1;
}

.addon-title .drop::before {
    border-width: 5px;
}

.addon-tools {
    display: flex;
    gap: 9px;
    padding: 8px;
}

.addon-tools svg {
    width: 24px;
    height: 24px;
}

/* Arbeitsbereich */
.workspace {
    flex: 1;
    min-height: 0;
    display: flex;
}

.document {
    flex: 1;
    min-width: 0;
    display: flex;
    flex-direction: column;
}

.formula-bar {
    display: flex;
    align-items: center;
    height: 35px;
    padding-right: 12px;
    border-bottom: 1px solid #bbb;
}

.formula-tool {
    width: 26px;
    height: 26px;
    font-size: 16px;
    font-weight: 600;
}

.formula-tool sub {
    align-self: flex-end;
    margin-bottom: 4px;
    font-size: 10px;
    line-height: 10px;
}

.combo-name + .formula-tool {
    margin-left: 7px;
}

.formula-input {
    flex: 1;
    height: 22px;
    margin: 0 3px 0 7px;
    border: 1px solid #b9b9b9;
    background: #fff;
}

.sheet-area {
    flex: 1;
    min-height: 0;
    display: flex;
}

.sheet {
    flex: 1;
    min-width: 0;
    position: relative;
    overflow: hidden;
    background: #fff;
}

.cells {
    width: max-content;
    table-layout: fixed;
    border-spacing: 0;
    color: #000;
    font-size: 12px;
    line-height: 16px;
}

.cells th,
.cells td {
    width: 108px;
    height: 22px;
    padding: 0;
    border-right: 1px solid #c0c0c0;
    border-bottom: 1px solid #c0c0c0;
}

.cells th {
    padding: 1px 0 0 1px;
    border-color: #222;
    background: #f4f4f4;
    font-weight: normal;
}

.cells thead th {
    height: 17px;
    padding-top: 0;
}

.cells th:first-child {
    width: 33px;
}

.cells th.current {
    background: #92b372;
    color: #fff;
    font-weight: bold;
}

.cell-cursor {
    position: absolute;
    top: 16px;
    left: 32px;
    width: 109px;
    height: 23px;
    border: 2px solid #000;
}

.cell-cursor::after {
    content: "";
    position: absolute;
    right: -4px;
    bottom: -4px;
    width: 5px;
    height: 5px;
    background: #000;
}

.vscroll {
    width: 12px;
    display: flex;
    flex-direction: column;
    align-items: center;
    background: #fcfcfc;
}

.vsplit {
    align-self: stretch;
    height: 5px;
    margin-bottom: 5px;
    border: 2px solid #b0b0b0;
    border-width: 2px 3px;
    background: #222;
}

.vthumb {
    width: 6px;
    height: 47.4%;
    border-radius: 3px;
    background: #a6a6a6;
}

.hscroll {
    display: flex;
    align-items: center;
    height: 12px;
    padding: 0 12px 0 4px;
    background: #fcfcfc;
}

.hthumb {
    width: 46.6%;
    height: 6px;
    border-radius: 3px;
    background: #a6a6a6;
}

.hsplit {
    width: 5px;
    height: 12px;
    margin-left: auto;
    border: 2px solid #b0b0b0;
    border-width: 3px 2px;
    background: #222;
}

.sheet-tabs {
    display: flex;
    height: 24px;
    padding-left: 7px;
    color: #000;
    font-size: 12px;
}

.tab-nav {
    width: 22px;
}

.tab-nav svg {
    width: 16px;
    height: 16px;
}

.tab-add {
    width: 40px;
}

.tab-add svg {
    width: 16px;
    height: 16px;
}

.tab {
    padding: 0 13px 0 12px;
    border-bottom: 3px solid transparent;
    border-top: 2px solid transparent;
}

.tab.active {
    border-color: #fff #fff #222;
    background: #fff;
}

.splitter {
    display: flex;
    align-items: center;
    width: 7px;
    height: 880px;
    max-height: 100%;
    margin-bottom: 2px;
    border: 1px solid #b0b0b0;
}

.splitter button {
    flex: none;
    width: 7px;
    height: 73px;
    margin-left: -1px;
    background: #2d2d2d;
}

.splitter button::before {
    content: "";
    border: 4px solid transparent;
    border-left: 5px solid #eee;
    border-right: none;
}

.sidebar {
    display: flex;
    flex-direction: column;
    align-items: center;
    gap: 3px;
    width: 40px;
    height: 880px;
    max-height: 100%;
    padding-top: 2px;
    border: 1px solid #b0b0b0;
    border-width: 1px 0;
}

.sidebar hr {
    width: 22px;
    margin: 0;
    border: none;
    border-top: 1px solid #ddd;
}

.sidebar button {
    width: 32px;
    height: 32px;
    border: 1px solid transparent;
    border-radius: 3px;
}

.sidebar .current {
    border-color: #bbb;
}

.sidebar svg {
    width: 22px;
    height: 22px;
}

.sidebar .fx {
    font-size: 20px;
}

.fx sub {
    align-self: flex-end;
    margin-bottom: 4px;
    font-size: 16px;
    font-weight: bold;
    line-height: 16px;
}

/* Statusleiste */
.statusbar {
    display: flex;
    align-items: center;
    height: 21px;
    padding-top: 1px;
    border-top: 1px solid #b9b9b9;
    color: #000;
    font-size: 12px;
    line-height: 16px;
}

.statusbar > span {
    height: 16px;
    border-right: 1px solid #d4d4d4;
    text-align: center;
    white-space: nowrap;
}

.statusbar > span:last-child {
    border: none;
}

.statusbar .status-sheet {
    width: 316px;
    padding-left: 10px;
    text-align: left;
}

.status-find { width: 283px; }

.statusbar .status-style {
    width: 274px;
    padding-left: 8px;
    text-align: left;
}

.status-lang { width: 351px; }
.status-empty { width: 68px; }
.status-icon { width: 29px; }
.status-sum { flex: 1; }

.status-slider {
    display: flex;
    align-items: center;
    width: 143px;
    padding: 0 3px 0 6px;
}

.status-slider button {
    width: 16px;
    color: #777;
    font-size: 16px;
}

.status-slider input {
    flex: 1;
    min-width: 0;
    height: 12px;
    margin: 0;
    appearance: none;
    background: linear-gradient(#333, #333) center / 100% 1px no-repeat;
}

.status-slider input::-webkit-slider-thumb {
    appearance: none;
    width: 8px;
    height: 8px;
    border: 1px solid #777;
    border-radius: 50%;
    background: #fff;
}

.status-zoom { width: 50px; }

/* Desktop-Leiste */
.panel {
    display: flex;
    height: 41px;
    background: #303030;
    color: #e8e8e8;
}

.launcher {
    width: 46px;
}

.launcher.menu {
    width: 40px;
    margin-right: 3px;
}

.launcher.running {
    background: linear-gradient(#92b372, #92b372) center bottom / 40px 2px no-repeat;
}

.tray {
    display: flex;
    align-items: center;
    gap: 10px;
    margin-left: auto;
    padding-right: 5px;
}

.tray-notes {
    display: flex;
    gap: 6px;
}

.clock {
    font-weight: bold;
}

/* Dialog */
.dialog {
    position: absolute;
    top: 313px;
    left: 50%;
    width: 940px;
    margin-left: -469px;
    border: 1px solid #bbb;
    border-radius: 9px 9px 0 0;
    background: #f5f5f5;
    box-shadow: 0 5px 18px rgba(0,0,0,0.5);
}

.dialog-title {
    display: flex;
    align-items: center;
    height: 29px;
    padding: 0 6px 0 24px;
    border-radius: 8px 8px 0 0;
    background: #e8e8e8;
}

.dialog-title h1 {
    flex: 1;
    margin: 0;
    color: #444;
    font-size: 13px;
    font-weight: 600;
    text-align: center;
}

.dialog-body {
    padding: 8px 8px 14px;
}

.link-list {
    border: 1px solid #bfbfbf;
    background: #fff;
}

.links {
    width: 100%;
    table-layout: fixed;
    border-spacing: 0;
    text-align: left;
}

.col-file { width: 240px; }
.col-item { width: 160px; }
.col-type { width: 160px; }

.links th {
    height: 29px;
    padding: 0 6px;
    border-right: 1px solid #c4c4c4;
    border-bottom: 1px solid #c4c4c4;
    background: #f1f1f1;
    color: #555;
    font-weight: bold;
}

.links th:last-child {
    border-right: none;
}

.links td {
    height: 22px;
    padding: 0 4px;
}

.links .selected td {
    background: #92b372;
    color: #fff;
}

.more-rows {
    height: 5px;
    margin-left: 5px;
    background: repeating-linear-gradient(90deg, #c4c4c4 0 5px, transparent 5px 10px) 0 3px / 100% 1px no-repeat;
}

.source {
    display: flex;
    padding: 14px 0 11px;
}

.source span {
    width: 107px;
}

.source a {
    color: #5294e2;
    text-decoration-skip-ink: none;
    text-underline-offset: 4px;
    white-space: nowrap;
}

.details {
    display: grid;
    grid-template-columns: 94px 1fr;
    line-height: 22px;
}

.update {
    display: flex;
    align-items: center;
    height: 28px;
}

.update span {
    width: 97px;
}

.update label {
    display: flex;
    align-items: center;
    gap: 3px;
    margin-right: 18px;
    color: #999;
}

.update input {
    appearance: none;
    width: 14px;
    height: 14px;
    margin: 0;
    border: 1px solid #ddd;
    border-radius: 50%;
    background: #fafafa;
}

.update input:checked {
    border: 5px solid #bfd2ac;
}

.dialog-buttons {
    display: flex;
    gap: 4px;
    padding: 15px 6px 0;
}

.dialog-buttons button {
    width: 113px;
    height: 34px;
    border: 1px solid #c0c0c0;
    border-radius: 3px;
    background: #fafafa;
}

.dialog-buttons .help {
    margin-right: auto;
}
```
FILE: script.js
```
const COL_WIDTH = 108;
const ROW_HEIGHT = 22;

function buildSheet() {
    const sheet = document.getElementById('sheet');
    const cols = Math.min(26, Math.ceil((sheet.clientWidth - 33) / COL_WIDTH));
    const rows = Math.floor((sheet.clientHeight - 17) / ROW_HEIGHT);

    let html = '<thead><tr><th></th>';
    for (let c = 0; c < cols; c++) {
        html += `<th${c === 0 ? ' class="current"' : ''}>${String.fromCharCode(65 + c)}</th>`;
    }
    html += '</tr></thead><tbody>';

    // letzte Zeile ist angeschnitten und bleibt ohne Nummer
    for (let r = 1; r <= rows + 1; r++) {
        html += `<tr><th${r === 1 ? ' class="current"' : ''}>${r <= rows ? r : ''}</th>`;
        html += '<td></td>'.repeat(cols) + '</tr>';
    }
    document.getElementById('cells').innerHTML = html + '</tbody>';
}

buildSheet();
window.addEventListener('resize', buildSheet);
```
